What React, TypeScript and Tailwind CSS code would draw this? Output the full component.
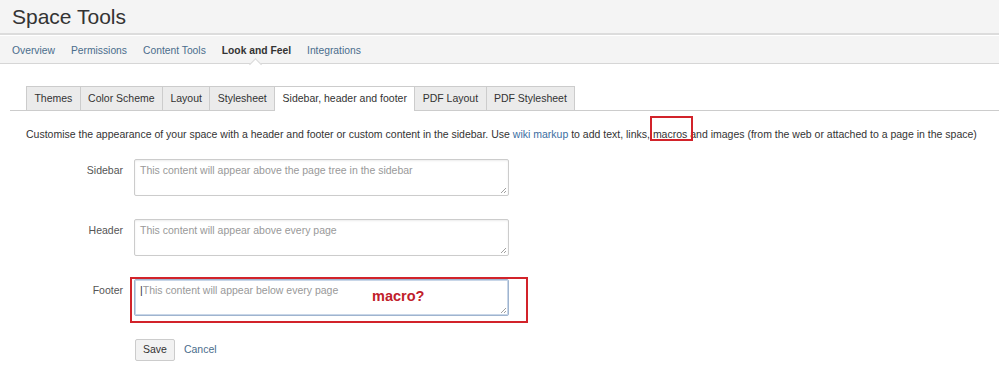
import React from 'react';

const navItems = ['Overview', 'Permissions', 'Content Tools', 'Look and Feel', 'Integrations'];
const tabs = ['Themes', 'Color Scheme', 'Layout', 'Stylesheet', 'Sidebar, header and footer', 'PDF Layout', 'PDF Stylesheet'];

const Field = ({ label, placeholder, focused }: { label: string; placeholder: string; focused?: boolean }) => (
  <div className="flex items-start">
    <div className="w-[135px] pr-[12px] pt-[4px] text-right text-[10.5px] text-[#555]">{label}</div>
    <div
      className={
        'relative -ml-px h-[37px] w-[375px] rounded-[2px] border bg-white px-[5px] pt-[3px] text-[10.5px] text-[#999] ' +
        (focused ? 'border-[#9fb4cf] shadow-[inset_0_0_0_1px_#c8d6e8]' : 'border-[#ccc] shadow-[inset_0_1px_2px_rgba(0,0,0,0.08)]')
      }
    >
      {focused && <span className="text-[#333]">|</span>}
      {placeholder}
      <svg className="absolute bottom-[1px] right-[1px]" width="7" height="7" viewBox="0 0 7 7">
        <path d="M6 1 L1 6 M6 4 L4 6" stroke="#888" strokeWidth="0.8" />
      </svg>
    </div>
  </div>
);

const App = () => {
  return (
    <div className="h-[381px] w-[999px] overflow-hidden bg-white font-['Liberation_Sans',Arial,sans-serif] text-[#333]">
      <div className="h-[35px] border-b-2 border-[#dcdcdc] bg-[#f4f4f4] pl-[12px] pt-[4px] text-[21px] leading-[26px] text-[#333]">
        Space Tools
      </div>
      <div className="relative flex h-[29px] items-center gap-[16px] border-t border-t-white border-b border-b-[#d6d6d6] bg-[#f4f4f4] pl-[12px] pt-[2px] text-[10.3px]">
        {navItems.map((n) =>
          n === 'Look and Feel' ? (
            <span key={n} className="relative font-bold text-[#333]">
              {n}
              <span className="absolute left-1/2 top-[17px] -ml-[5px] h-[9px] w-[9px] rotate-45 border-l border-t border-[#d6d6d6] bg-white" />
            </span>
          ) : (
            <span key={n} className="text-[#4a6d8c]">
              {n}
            </span>
          )
        )}
      </div>
      <div className="mt-[22px] ml-[10px] flex border-b border-[#ccc] pl-[16px]">
        {tabs.map((t, i) => (
          <div
            key={t}
            className={
              'h-[24px] border border-b-0 border-[#ccc] px-[7.4px] pt-[5px] text-[10.5px] leading-[13px] ' +
              (i > 0 ? '-ml-px ' : '') +
              (i === 4 ? 'relative -mb-px h-[25px] bg-white text-[#333]' : 'bg-[#ebebeb] text-[#333]')
            }
          >
            {t}
          </div>
        ))}
      </div>
      <p className="mt-[16px] whitespace-nowrap pl-[26px] text-[10.5px] leading-[14px] text-[#333]">
        Customise the appearance of your space with a header and footer or custom content in the sidebar. Use{' '}
        <span className="text-[#3b6e9f]">wiki markup</span> to add text, links,{' '}
        <span className="relative">
          macros
          <span className="absolute -left-[3px] -top-[12px] h-[25px] w-[43px] border-2 border-[#d2232a]" />
        </span>{' '}
        and images (from the web or attached to a page in the space)
      </p>
      <div className="mt-[18px] flex flex-col gap-[23px]">
        <Field label="Sidebar" placeholder="This content will appear above the page tree in the sidebar" />
        <Field label="Header" placeholder="This content will appear above every page" />
        <div className="relative">
          <Field label="Footer" placeholder="This content will appear below every page" focused />
          <div className="absolute left-[130px] top-[-2px] h-[46px] w-[398px] border-2 border-[#d2232a]" />
          <span className="absolute left-[372px] top-[7px] text-[14.5px] font-bold text-[#c0202a]">macro?</span>
        </div>
      </div>
      <div className="mt-[23px] flex items-center pl-[135px]">
        <button className="h-[22px] rounded-[2px] border border-[#ccc] bg-[#f2f2f2] px-[7px] text-[10.5px] text-[#333]">Save</button>
        <span className="ml-[9px] text-[10.5px] text-[#4a6d8c]">Cancel</span>
      </div>
    </div>
  );
};

export default App;
